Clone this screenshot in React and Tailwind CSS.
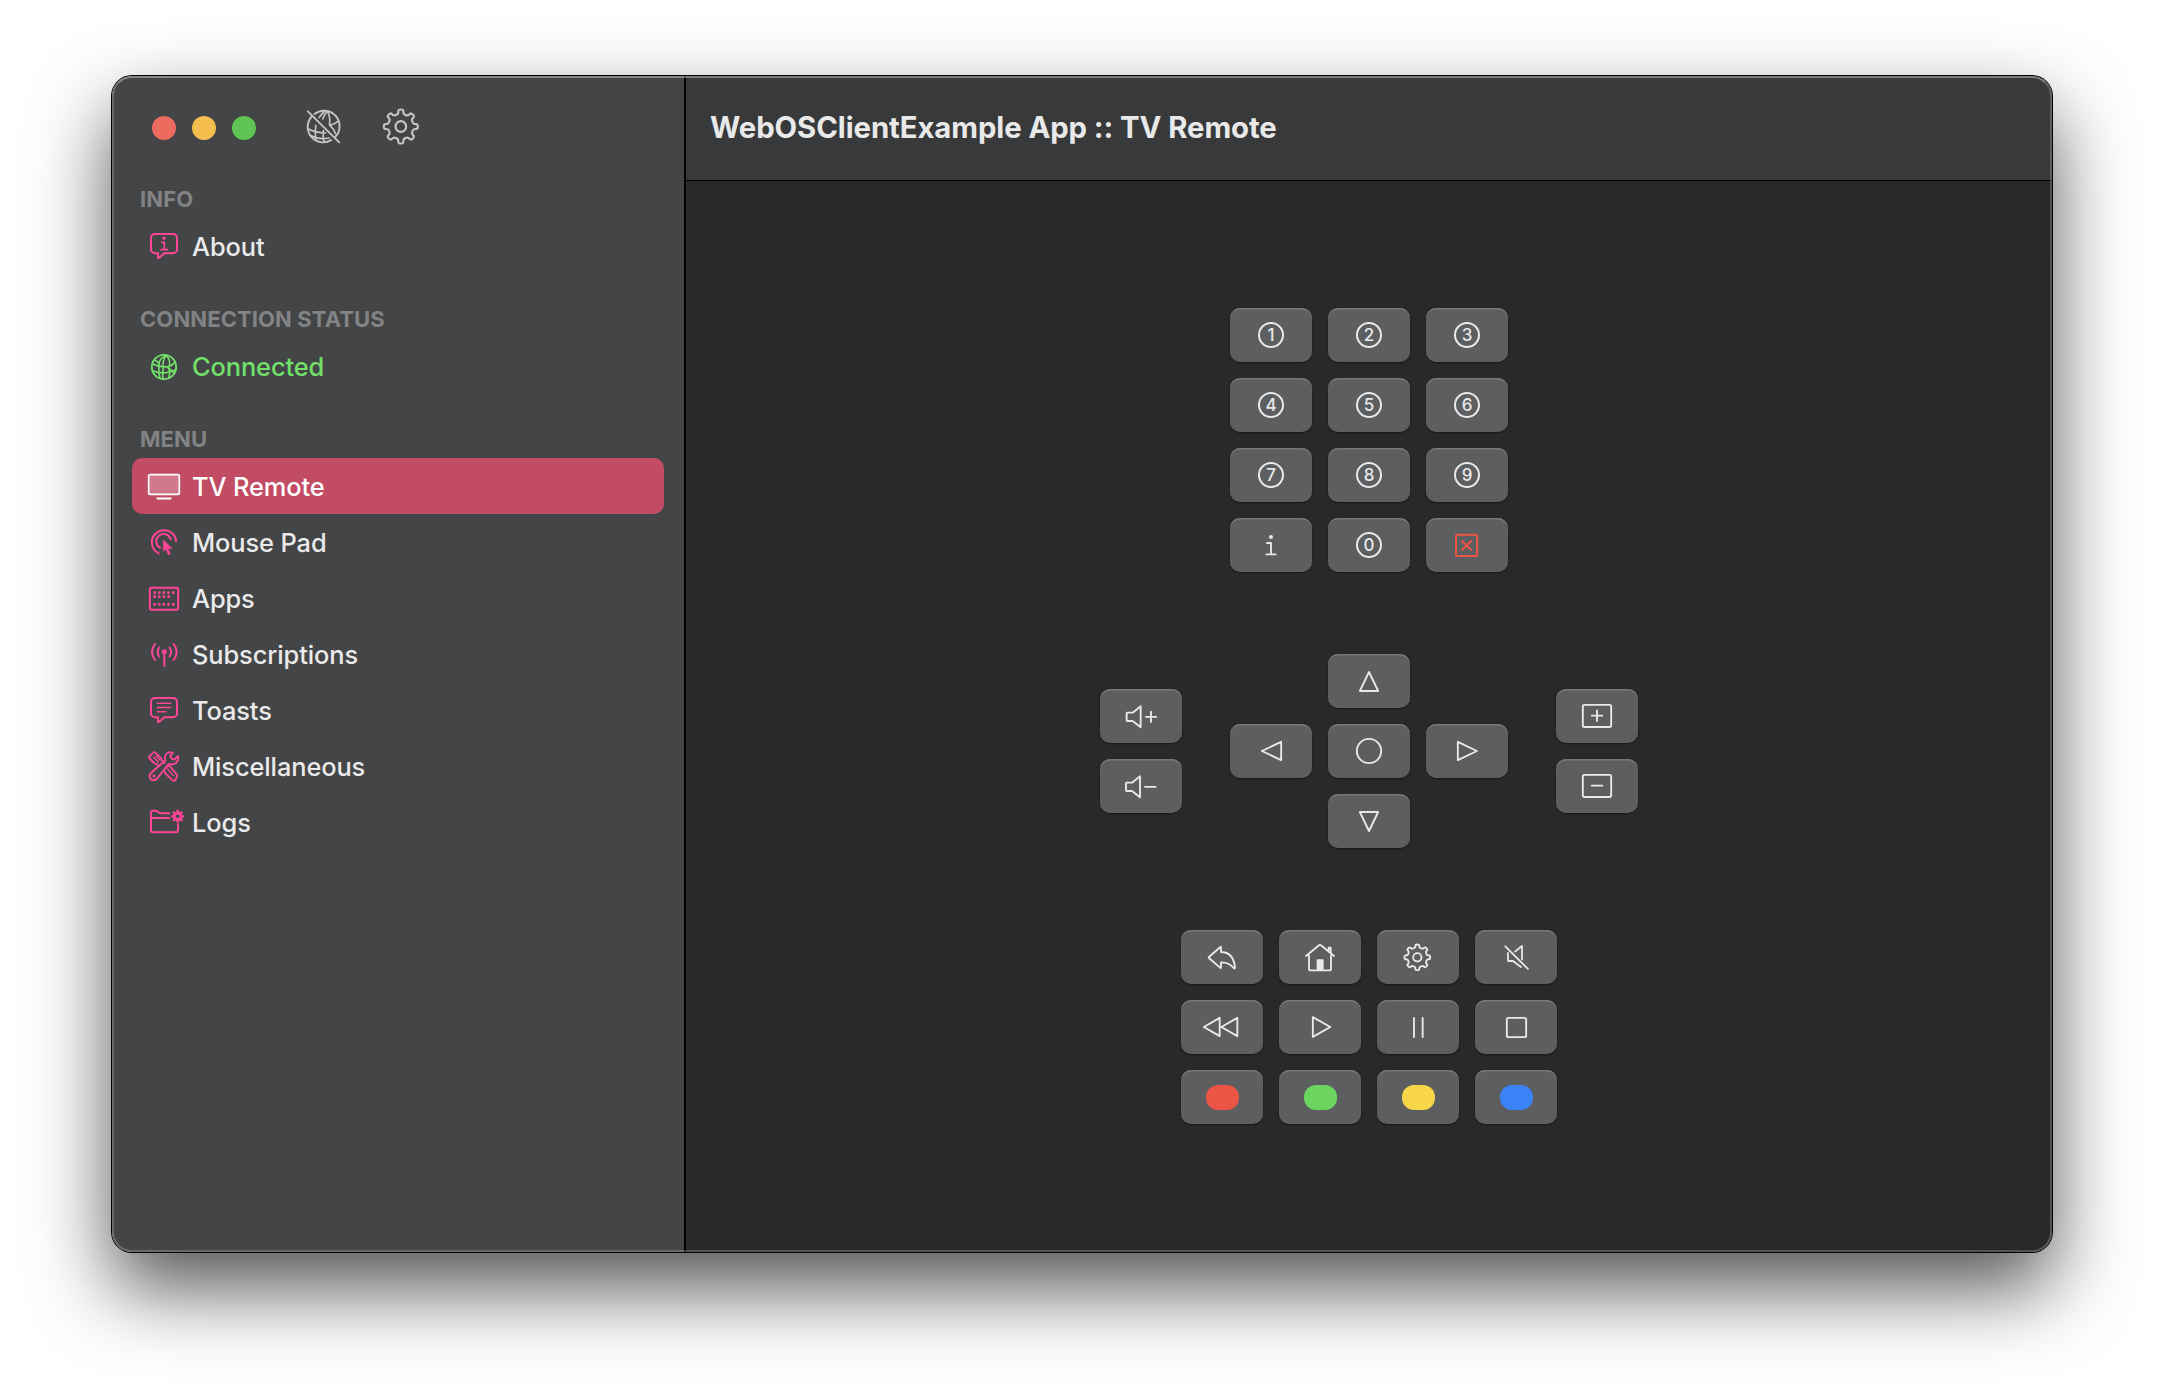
import React from "react";

function gearPath(cx, cy, outer, root, teeth = 8) {
  const pts = [];
  const step = 360 / teeth;
  const profile = [
    [-15, root],
    [-10.5, root + (outer - root) * 0.25],
    [-8.5, outer],
    [8.5, outer],
    [10.5, root + (outer - root) * 0.25],
    [15, root],
  ];
  for (let i = 0; i < teeth; i++) {
    for (const [a, r] of profile) {
      const t = ((i * step + a - 90) * Math.PI) / 180;
      pts.push([cx + r * Math.cos(t), cy + r * Math.sin(t)]);
    }
  }
  const mid = (p, q) => [(p[0] + q[0]) / 2, (p[1] + q[1]) / 2];
  const f = (p) => `${p[0].toFixed(2)} ${p[1].toFixed(2)}`;
  let d = `M${f(mid(pts[pts.length - 1], pts[0]))}`;
  pts.forEach((p, i) => {
    d += `Q${f(p)} ${f(mid(p, pts[(i + 1) % pts.length]))}`;
  });
  return d + "Z";
}

function Icon({ box, className, sw = 5.6, children }) {
  return (
    <svg
      viewBox={box}
      className={className}
      fill="none"
      stroke="currentColor"
      strokeWidth={sw}
      strokeLinecap="round"
      strokeLinejoin="round"
    >
      {children}
    </svg>
  );
}

const solid = { fill: "currentColor", stroke: "none" };

const GlobeSlash = () => (
  <Icon box="612.5 134 120 120" className="size-10" sw={5.8}>
    <path d="M644 158A46.500 46.500 0 0 1 707 226M694 236.500A46.500 46.500 0 0 1 636 165" />
    <path d="M624 150L718 243" />
    <path
      d="M673 152Q663 160 658 169M681 152Q672 162 669 173M684 152Q692 168 689 190M690 192Q706 188 714 180M690 192Q702 202 707 217"
      strokeWidth="5"
    />
    <path
      d="M626 203Q646 214 678 215M648 192Q644 212 648 235M630 222Q656 236 688 230M671 208Q668 226 672 240"
      strokeWidth="5"
    />
  </Icon>
);

const TitleGear = () => (
  <Icon box="842.5 138 120 120" className="size-10" sw={6.4}>
    <path d={gearPath(902, 199.5, 51.5, 38)} />
    <circle cx="902" cy="199.500" r="16" />
  </Icon>
);

const rowIcon = "h-14 w-10 shrink-0";

const AboutIcon = () => (
  <Icon box="132 474 120 168" className={rowIcon} sw={6}>
    <path d="M165 522h54a12 12 0 0 1 12 12v34a12 12 0 0 1-12 12h-26l-16 14q-3 2-3-2v-12h-9a12 12 0 0 1-12-12v-34a12 12 0 0 1 12-12z" />
    <circle cx="192" cy="534.500" r="5" {...solid} />
    <path d="M185 547h8v22M183 569h19" strokeWidth="5" />
  </Icon>
);

const NetworkIcon = () => (
  <Icon box="132 144 120 168" className={rowIcon} sw={4.8}>
    <circle cx="192" cy="231" r="36.500" strokeWidth="5.500" />
    <path d="M196 196Q172 212 177 230Q174 246 180 265M198 196Q186 214 190 232Q186 250 189 267M199 196Q216 214 205 234Q212 248 206 264" />
    <path d="M158 222Q178 233 205 230Q218 226 225 216M157 242Q182 252 205 247Q218 245 227 239M164 210Q172 214 178 222M205 234Q216 240 222 250" />
  </Icon>
);

const TvIcon = () => (
  <Icon box="132 504 120 168" className={rowIcon} sw={5}>
    <rect x="146" y="554" width="92" height="59" rx="5" fill="currentColor" fillOpacity="0.25" />
    <path d="M172 625.500h40" strokeWidth="5.500" />
  </Icon>
);

const PointerIcon = () => (
  <Icon box="132 672 120 168" className={rowIcon} sw={6}>
    <path d="M228.500 754A36.500 36.500 0 1 0 176 790" />
    <path d="M212 748A22 22 0 1 0 180 773" />
    <path d="M190 751V784L198 778L205 795L211 792L204 776L216 775Z" fill="currentColor" strokeWidth="1.500" />
  </Icon>
);

const dotRows = [
  [98, [74, 87.5, 101.5, 115.5, 130]],
  [110, [74, 87.5, 101.5, 116]],
  [133, [74, 87.5, 101.5, 115.5, 130]],
];

const KeyboardIcon = () => (
  <Icon box="42 30 120 168" className={rowIcon} sw={6}>
    <rect x="59.500" y="83.500" width="85" height="65.500" rx="6" />
    <g {...solid}>
      {dotRows.map(([y, xs]) =>
        xs.map((x) => <rect key={`${x}-${y}`} x={x - 4} y={y - 4} width="8" height="8" rx="2" />)
      )}
    </g>
  </Icon>
);

const AntennaIcon = () => (
  <Icon box="42 198 120 168" className={rowIcon} sw={6}>
    <circle cx="103" cy="275.500" r="7.500" {...solid} />
    <path d="M103 278v40" />
    <path d="M87 263Q79 276 87 289M119 263Q127 276 119 289M75 252Q57 276 75 300M131 252Q149 276 131 300" />
  </Icon>
);

const BubbleIcon = () => (
  <Icon box="42 366 120 168" className={rowIcon} sw={6}>
    <path d="M75 414h54a12 12 0 0 1 12 12v34a12 12 0 0 1-12 12h-26l-16 14q-3 2-3-2v-12h-9a12 12 0 0 1-12-12v-34a12 12 0 0 1 12-12z" />
    <path d="M82 430h40M82 442.500h40M82 455h26" strokeWidth="4.300" />
  </Icon>
);

const ToolsIcon = () => (
  <Icon box="42 534 120 168" className={rowIcon} sw={5.6}>
    <path d="M58 594q-2-3 1-6l11-10q3-3 6 0l16 15q3 9 11 16M58 594l15 16q9 2 15 9" />
    <path d="M71 592l14 14M78 588l12 12" strokeWidth="4" />
    <path d="M108 623l5-6q8 2 12 8l15 18q3 4 0 8l-4 10q-4 3-8 0l-17-16q-6-4-8-12" />
    <path d="M112 626l18 21" strokeWidth="4" />
    <path d="M128 578q-12-4-19 4q-7 8-3 19l-43 38q-8 8-1 18q9 8 18 0l36-45q13 4 22-3q10-8 6-21l-11 11q-10-1-12-11z" />
    <circle cx="72" cy="648" r="4.500" {...solid} />
  </Icon>
);

const FolderGearIcon = () => (
  <Icon box="42 702 120 168" className={rowIcon} sw={6}>
    <path d="M118 760H93q-4 0-7-3l-3-2q-3-3-7-3h-7q-6 0-6 6v52q0 7 7 7h67q7 0 7-7v-17M64 774H118" />
    <path d={gearPath(143, 769, 19, 13)} fill="currentColor" strokeWidth="2.500" />
    <circle cx="143" cy="769" r="5.500" fill="#444546" stroke="none" />
  </Icon>
);

function SectionTitle({ children }) {
  return (
    <h2 className="flex h-[38px] items-center pl-2 text-[22px] leading-none font-bold tracking-[0.1px] text-[#828385]">
      {children}
    </h2>
  );
}

function Row({ icon, label, active, color = "text-[#eaeaeb]", iconColor = "text-[#ff4598]" }) {
  return (
    <div className={`flex h-14 items-center rounded-[10px] pl-3 ${active ? "bg-[#c24c64]" : ""}`}>
      <span className={active ? "text-white" : iconColor}>{icon}</span>
      <span
        className={`ml-2 pt-[2px] text-[25.4px] leading-none font-[450] tracking-[-0.1px] whitespace-nowrap ${active ? "text-white" : color}`}
      >
        {label}
      </span>
    </div>
  );
}

function Key({ children }) {
  return (
    <button className="flex h-[54px] w-[82px] items-center justify-center rounded-[10px] bg-[#5d5e60] text-[#e9e9ea] shadow-[inset_0_1.500px_0_#79797b,0_1px_2px_rgba(0,0,0,0.45)]">
      {children}
    </button>
  );
}

function IconKey({ box, sw, color = "", children }) {
  return (
    <Key>
      <Icon box={`${box} 246 162`} sw={sw} className={`h-[54px] w-[82px] ${color}`}>
        {children}
      </Icon>
    </Key>
  );
}

function NumberKey({ n }) {
  return (
    <Key>
      <span className="flex size-[26px] items-center justify-center rounded-full border-2 border-[#e9e9ea] pt-px text-[17px] leading-none font-medium">
        {n}
      </span>
    </Key>
  );
}

function ColorKey({ color }) {
  return (
    <Key>
      <span className={`h-[25px] w-[33px] rounded-[12px] ${color}`} />
    </Key>
  );
}

export default function App() {
  return (
    <div className="h-[1400px] w-[2164px] overflow-hidden bg-white px-28 pt-19 font-['Inter',sans-serif]">
      <div className="relative flex h-[1176px] w-[1940px] overflow-hidden rounded-[20px] shadow-[0_0_0_1px_#000,0_36px_80px_rgba(0,0,0,0.68)]">
        <aside className="w-[572px] shrink-0 bg-[#444546] px-5">
          <div className="flex h-26 items-center pl-5">
            <div className="flex gap-4">
              <span className="size-6 rounded-full bg-[#ed6a5e]" />
              <span className="size-6 rounded-full bg-[#f5bf4f]" />
              <span className="size-6 rounded-full bg-[#61c554]" />
            </div>
            <div className="mb-1 ml-12 flex gap-[37px] text-[#c5c5c6]">
              <GlobeSlash />
              <TitleGear />
            </div>
          </div>
          <div className="flex flex-col gap-[26px]">
            <section>
              <SectionTitle>INFO</SectionTitle>
              <Row icon={<AboutIcon />} label="About" />
            </section>
            <section>
              <SectionTitle>CONNECTION STATUS</SectionTitle>
              <Row icon={<NetworkIcon />} label="Connected" color="text-[#72e06a]" iconColor="text-[#72e06a]" />
            </section>
            <section>
              <SectionTitle>MENU</SectionTitle>
              <Row icon={<TvIcon />} label="TV Remote" active />
              <Row icon={<PointerIcon />} label="Mouse Pad" />
              <Row icon={<KeyboardIcon />} label="Apps" />
              <Row icon={<AntennaIcon />} label="Subscriptions" />
              <Row icon={<BubbleIcon />} label="Toasts" />
              <Row icon={<ToolsIcon />} label="Miscellaneous" />
              <Row icon={<FolderGearIcon />} label="Logs" />
            </section>
          </div>
        </aside>
        <main className="flex flex-1 flex-col border-l-2 border-black bg-[#28292b]">
          <header className="flex h-[105px] items-center border-b border-black bg-[#38393a] pl-6">
            <h1 className="text-[29.3px] leading-none font-bold tracking-[-0.08px] whitespace-nowrap text-[#e9e9ea]">
              WebOSClientExample App :: TV Remote
            </h1>
          </header>
          <div className="flex flex-1 flex-col items-center justify-center gap-[82px] pb-px">
            <div className="grid grid-cols-3 gap-4">
              {[1, 2, 3, 4, 5, 6, 7, 8, 9].map((n) => (
                <NumberKey key={n} n={n} />
              ))}
              <IconKey box="60 684">
                <circle cx="183" cy="741" r="6" {...solid} />
                <path d="M171 759h12v34M169 793h28" />
              </IconKey>
              <NumberKey n={0} />
              <IconKey box="648 684" sw={6} color="text-[#ee5445]">
                <rect x="738" y="734.500" width="63.500" height="63.500" rx="4" />
                <path d="M756 753L784 780M784 753L756 780" strokeWidth="5.500" />
              </IconKey>
            </div>
            <div className="flex items-center gap-12">
              <div className="grid gap-4">
                <IconKey box="60 147">
                  <path d="M140 220q0-2 2-2h16L182 199V262L158 243H142q-2 0-2-2z" />
                  <path d="M197.500 230.500h31M213 215v31" />
                </IconKey>
                <IconKey box="60 357">
                  <path d="M138 430q0-2 2-2h16L180 409V472L156 453H140q-2 0-2-2z" />
                  <path d="M195 440.500h32" />
                </IconKey>
              </div>
              <div className="grid grid-cols-3 gap-4">
                <span />
                <IconKey box="744 42">
                  <path d="M867 96L839.500 153H894.500Z" />
                </IconKey>
                <span />
                <IconKey box="450 252">
                  <path d="M545.500 333L603.500 305.500V360.500Z" />
                </IconKey>
                <IconKey box="744 252">
                  <circle cx="867" cy="333" r="36.500" />
                </IconKey>
                <IconKey box="138 252">
                  <path d="M291 333L233.500 305.500V360.500Z" />
                </IconKey>
                <span />
                <IconKey box="744 462">
                  <path d="M867 573L839.500 516H894.500Z" />
                </IconKey>
                <span />
              </div>
              <div className="grid gap-4">
                <IconKey box="528 147">
                  <rect x="608.500" y="194.500" width="85" height="66.500" rx="5" />
                  <path d="M635 227h32M651 211v32" />
                </IconKey>
                <IconKey box="528 357">
                  <rect x="608.500" y="404.500" width="85" height="66.500" rx="5" />
                  <path d="M635 437h32" />
                </IconKey>
              </div>
            </div>
            <div className="grid grid-cols-4 gap-4">
              <IconKey box="63 60">
                <path d="M147 141L181 111q2-2 2 1V126Q220 126 225 172q0 6-4 2Q206 156 183 157V172q0 4-3 1L147 144q-2-1.500 0-3z" />
              </IconKey>
              <IconKey box="357 60">
                <path d="M438 138L477 106q3-2 6 0L522 138" />
                <path d="M447 136V176q0 5 5 5h56q5 0 5-5V136M506 120V113h6v14" />
                <path d="M470 181V150q0-2 2-2h17q2 0 2 2V181z" {...solid} />
              </IconKey>
              <IconKey box="651 60">
                <path d={gearPath(772, 142, 39, 29.5)} />
                <circle cx="772" cy="142" r="12.500" />
              </IconKey>
              <IconKey box="945 60" sw={5.3}>
                <path d="M1036 109L1104 177" />
                <path d="M1065 125L1086 108V148M1044 129V151q0 2 2 2h13L1083 171" />
              </IconKey>
              <IconKey box="63 270">
                <path d="M131.500 351L179 323.500V378.500ZM184 351L232 323.500V378.500Z" />
              </IconKey>
              <IconKey box="357 270">
                <path d="M458.500 321.500L511 351L458.500 380.500Z" />
              </IconKey>
              <IconKey box="651 270">
                <path d="M762 323.500v58M788 323.500v58" />
              </IconKey>
              <IconKey box="945 270">
                <rect x="1040.500" y="323.500" width="58" height="58" rx="5" />
              </IconKey>
              <ColorKey color="bg-[#ec5545]" />
              <ColorKey color="bg-[#6bd560]" />
              <ColorKey color="bg-[#f8d649]" />
              <ColorKey color="bg-[#3b82f6]" />
            </div>
          </div>
        </main>
        <div className="pointer-events-none absolute inset-0 rounded-[20px] border-2 border-white/20 border-t-white/35" />
      </div>
    </div>
  );
}
